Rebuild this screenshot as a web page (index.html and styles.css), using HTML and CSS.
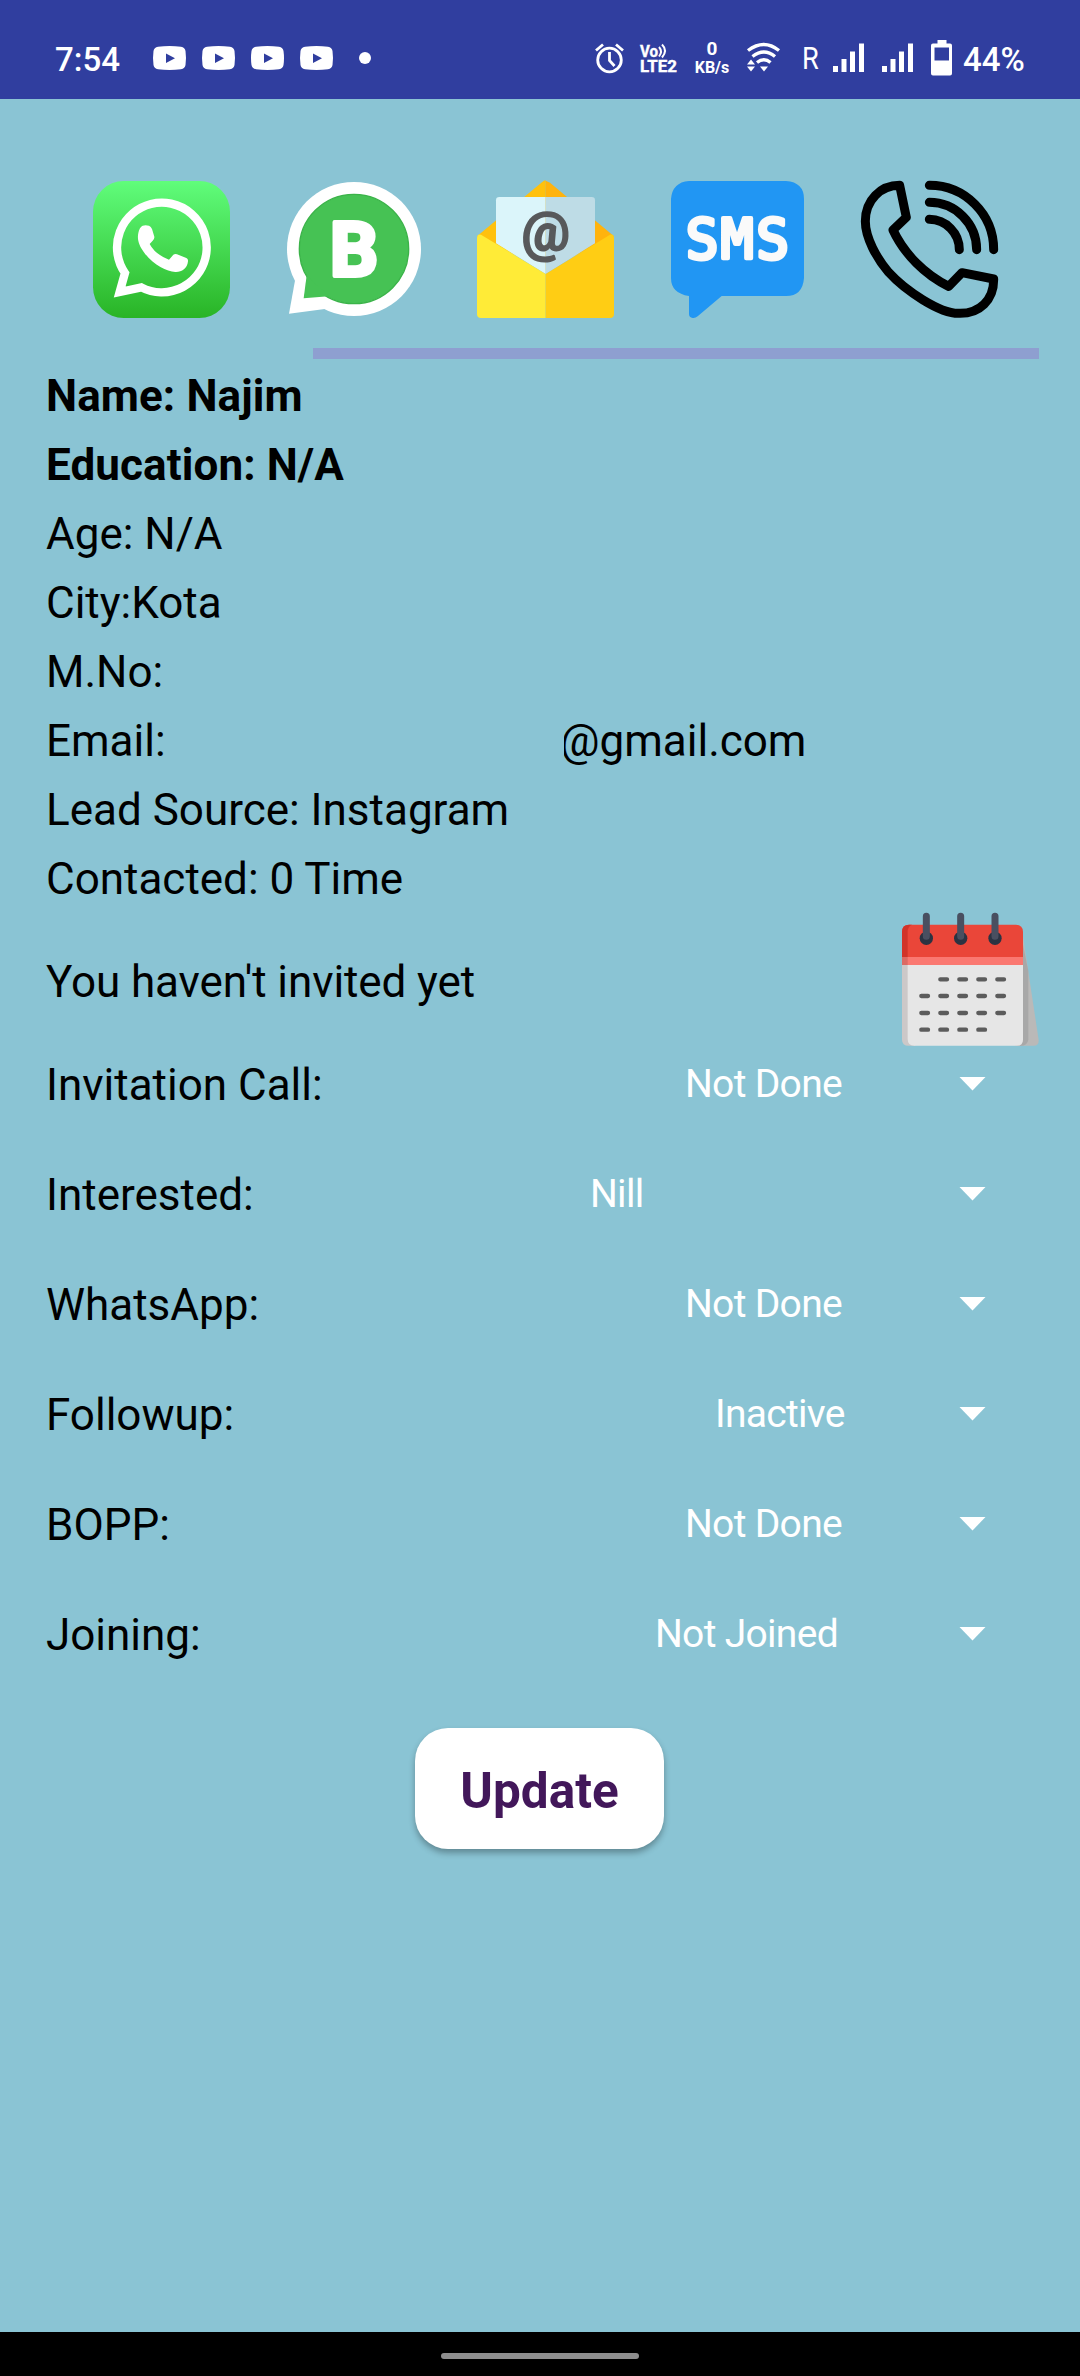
FILE: index.html
```html
<!DOCTYPE html>
<html lang="en">
<head>
    <meta charset="UTF-8">
    <meta name="viewport" content="width=device-width, initial-scale=1.0">
    <title>Lead Details</title>
    <link rel="stylesheet" href="styles.css">
</head>
<body>
    <div class="screen">
        <header class="status-bar">
            <span class="clock">7:54</span>
            <div class="notifications">
                <svg class="yt" viewBox="0 0 33 24"><path fill="#fff" fill-rule="evenodd" d="M5 .8Q16.500-.8 28 .8Q32 1.500 32.500 5Q33.500 12 32.500 19Q32 22.500 28 23.200Q16.500 24.800 5 23.200Q1 22.500 .5 19Q-.5 12 .5 5Q1 1.500 5 .8ZM13 7.500V17L22 12.200Z"/></svg>
                <svg class="yt" viewBox="0 0 33 24"><path fill="#fff" fill-rule="evenodd" d="M5 .8Q16.500-.8 28 .8Q32 1.500 32.500 5Q33.500 12 32.500 19Q32 22.500 28 23.200Q16.500 24.800 5 23.200Q1 22.500 .5 19Q-.5 12 .5 5Q1 1.500 5 .8ZM13 7.500V17L22 12.200Z"/></svg>
                <svg class="yt" viewBox="0 0 33 24"><path fill="#fff" fill-rule="evenodd" d="M5 .8Q16.500-.8 28 .8Q32 1.500 32.500 5Q33.500 12 32.500 19Q32 22.500 28 23.200Q16.500 24.800 5 23.200Q1 22.500 .5 19Q-.5 12 .5 5Q1 1.500 5 .8ZM13 7.500V17L22 12.200Z"/></svg>
                <svg class="yt" viewBox="0 0 33 24"><path fill="#fff" fill-rule="evenodd" d="M5 .8Q16.500-.8 28 .8Q32 1.500 32.500 5Q33.500 12 32.500 19Q32 22.500 28 23.200Q16.500 24.800 5 23.200Q1 22.500 .5 19Q-.5 12 .5 5Q1 1.500 5 .8ZM13 7.500V17L22 12.200Z"/></svg>
                <span class="dot"></span>
            </div>
            <div class="system-icons">
                <svg class="alarm" viewBox="0 0 29 30" fill="none" stroke="#fff" stroke-width="2.800"><circle cx="14.500" cy="17" r="11.800"/><path d="M14.500 9v8.500l5 5.500M1 7.500L8 1.500M28 7.500L21 1.500"/></svg>
                <svg class="volte" viewBox="0 0 37 30"><g fill="#fff" stroke="#fff" stroke-width=".4"><text x="0" y="13.500" font-size="16" font-weight="700" textLength="18" lengthAdjust="spacingAndGlyphs">Vo</text><text x="0" y="28.500" font-size="17" font-weight="700" textLength="37" lengthAdjust="spacingAndGlyphs">LTE2</text></g><path fill="none" stroke="#fff" stroke-width="2" d="M19 4q4 4.500 0 9.500M22 1.500q6 6 0 13"/></svg>
                <div class="speed"><span>0</span><span>KB/s</span></div>
                <svg class="wifi" viewBox="0 0 33 29"><g fill="none" stroke="#fff" stroke-width="3.400"><path d="M1 7.500Q17-4.500 32 7.500M5.500 13.500Q17 4.500 28 13.500M10 19.500Q17 14 23.500 19.500"/></g><path fill="#fff" d="M0 21.500L4 16.500L8 21.500ZM0 23.500L4 28.500L8 23.500ZM13 23.500L17 28.500L21 23.500Z"/></svg>
                <span class="roaming">R</span>
                <svg class="signal" viewBox="0 0 31 29" fill="#fff"><path d="M0 23h5v6H0zM8.500 16h5v13h-5zM17 8.500h5v20.500h-5zM26 .5h5v28.500h-5z"/></svg>
                <svg class="signal second" viewBox="0 0 31 29" fill="#fff"><path d="M0 23h5v6H0zM8.500 16h5v13h-5zM17 8.500h5v20.500h-5zM26 .5h5v28.500h-5z"/></svg>
                <svg class="battery" viewBox="0 0 21 36"><path fill="#fff" fill-rule="evenodd" d="M6.500 0h9v3.500H19q2 0 2 2V33.500q0 2-2 2H2q-2 0-2-2V5.500q0-2 2-2H6.500ZM3.500 7.500V20.500H18V7.500Z"/></svg>
                <span class="percent">44%</span>
            </div>
        </header>

        <main class="content">
            <nav class="contact-icons">
                <!-- WhatsApp -->
                <svg viewBox="39 63 411 411">
                    <defs>
                        <linearGradient id="waGreen" x1="0" y1="0" x2="0" y2="1">
                            <stop offset="0" stop-color="#60fd7b"/>
                            <stop offset="1" stop-color="#29b426"/>
                        </linearGradient>
                    </defs>
                    <rect x="39" y="63" width="411" height="411" rx="92" fill="url(#waGreen)"/>
                    <path fill="none" stroke="#fff" stroke-width="25" d="M119 396L135 339A134.500 134.500 0 1 1 184 382Z"/>
                    <path fill="#fff" d="M188 197Q196 194 207 197Q213 199 216 207L223 230Q224 236 218 242L209 252Q225 283 267 299L280 284Q285 281 291 283L319 294Q325 297 324 304C322 326 304 337 286 336C260 334 222 316 195 281C176 257 171 238 175 219C177 207 182 200 188 197Z"/>
                </svg>
                <!-- WhatsApp Business -->
                <svg viewBox="615 63 411 411">
                    <circle cx="822" cy="267" r="201" fill="#fff"/>
                    <path fill="#fff" d="M627 461L648 345L740 446Z"/>
                    <circle cx="822" cy="267" r="164" fill="#46c254" stroke="#3bb349" stroke-width="4"/>
                    <path fill="#46c254" d="M671 415L680 346L746 409Z"/>
                    <text class="badge-b" x="749" y="348">B</text>
                </svg>
                <!-- Email -->
                <svg viewBox="111 63 411 411">
                    <path fill="#ffc10d" d="M111 229L304 68Q317 58 317 62V330Z"/>
                    <path fill="#ffb30d" d="M522 229L330 68L317 62V330Z"/>
                    <path fill="#dbf5fa" d="M317 111H178Q168 111 168 121V250L317 342Z"/>
                    <path fill="#bedce6" d="M317 111H455Q465 111 465 121V250L317 342Z"/>
                    <path fill="#ffeb37" d="M317 342L123 224Q111 220 111 236V462Q111 474 123 474H317Z"/>
                    <path fill="#ffcd14" d="M317 342L510 224Q522 220 522 236V462Q522 474 510 474H317Z"/>
                    <text class="badge-at" x="317" y="269">@</text>
                </svg>
                <!-- SMS -->
                <svg viewBox="687 63 411 411">
                    <path fill="#2196f3" d="M747 63H1038Q1092 67 1092 117V354Q1088 408 1038 408H845L773 469Q766 475 758 474Q747 472 747 462V408Q693 400 693 354V117Q697 67 747 63Z"/>
                    <text class="badge-sms" x="737 842 949" y="294">SMS</text>
                </svg>
                <!-- Call -->
                <svg viewBox="123 63 411 411" fill="none" stroke="#000" stroke-width="27" stroke-linecap="round" stroke-linejoin="round">
                    <path d="M239 76L259 172L219 210C253 283 316 345 386 379L426 338L521 357C522 420 478 461 418 460C360 462 255 391 206 337C170 295 136 233 136 184C136 120 182 76 239 76Z"/>
                    <path d="M328 76A193 193 0 0 1 521 269M328 127A142 142 0 0 1 470 269M328 178A91 91 0 0 1 418 269"/>
                </svg>
            </nav>
            <div class="divider"></div>

            <section class="details">
                <p class="bold">Name: Najim</p>
                <p class="bold">Education: N/A</p>
                <p>Age: N/A</p>
                <p>City:Kota</p>
                <p>M.No:</p>
                <p class="email"><span>Email:</span><span class="domain">@gmail.com</span></p>
                <p>Lead Source: Instagram</p>
                <p>Contacted: 0 Time</p>
            </section>

            <section class="invite">
                <p>You haven't invited yet</p>
                <svg viewBox="0 0 411 411">
                    <path fill="#bab9b8" d="M362 70L410 387Q411 404 395 404H345V90Z"/>
                    <path fill="#a8a8a8" d="M362 95L379 180V386Q377 404 355 404H340V95Z"/>
                    <path fill="#ccc8c8" d="M0 150H40V404H20Q0 404 0 386Z"/>
                    <path fill="#e6e6e6" d="M17 150H363V386Q363 404 345 404H37Q17 404 17 384Z"/>
                    <path fill="#ea4639" d="M20 41H341Q363 41 363 63V138H0V63Q0 41 20 41Z"/>
                    <path fill="#d13329" d="M30 41H22Q0 41 0 63V138H17V63Q17 46 30 41Z"/>
                    <path fill="#fa7871" d="M0 138H363V162H0Z"/>
                    <path fill="#dc6a64" d="M0 138H17V162H0Z"/>
                    <g fill="#2c3342"><circle cx="73" cy="82" r="20"/><circle cx="176" cy="82" r="20"/><circle cx="279" cy="82" r="20"/></g>
                    <path stroke="#494f60" stroke-width="21" stroke-linecap="round" d="M73 16V76M176 16V76M279 16V76"/>
                    <path stroke="#5c5c5c" stroke-width="13" stroke-linecap="round" d="M115 205h20M172 205h20M229 205h20M286 205h20M58 255h20M115 255h20M172 255h20M229 255h20M286 255h20M58 306h20M115 306h20M172 306h20M229 306h20M286 306h20M58 356h20M115 356h20M172 356h20M229 356h20"/>
                </svg>
            </section>

            <section class="fields">
                <div class="field"><span class="label">Invitation Call:</span><div class="spinner not-done"><span>Not Done</span><i class="arrow"></i></div></div>
                <div class="field"><span class="label">Interested:</span><div class="spinner nill"><span>Nill</span><i class="arrow"></i></div></div>
                <div class="field"><span class="label">WhatsApp:</span><div class="spinner not-done"><span>Not Done</span><i class="arrow"></i></div></div>
                <div class="field"><span class="label">Followup:</span><div class="spinner inactive"><span>Inactive</span><i class="arrow"></i></div></div>
                <div class="field"><span class="label">BOPP:</span><div class="spinner not-done"><span>Not Done</span><i class="arrow"></i></div></div>
                <div class="field"><span class="label">Joining:</span><div class="spinner not-joined"><span>Not Joined</span><i class="arrow"></i></div></div>
            </section>

            <button class="update">Update</button>
        </main>

        <footer class="nav-bar"><span class="handle"></span></footer>
    </div>
</body>
</html>
```
FILE: styles.css
```css
* {
    box-sizing: border-box;
}

body {
    margin: 0;
    font-family: Roboto, sans-serif;
    color: #000;
}

p {
    margin: 0;
}

svg {
    display: block;
    flex: none;
    overflow: visible;
}

.screen {
    width: 1080px;
    height: 2376px;
    display: flex;
    flex-direction: column;
    background-color: #8ac4d4;
}

/* Status bar */
.status-bar {
    height: 99px;
    padding: 16px 0 0 55px;
    display: flex;
    align-items: center;
    background-color: #303e9f;
    color: #fff;
    font-size: 33px;
    font-weight: 500;
    white-space: nowrap;
}

.clock {
    width: 98px;
    padding-top: 3px;
}

.notifications {
    width: 442px;
    display: flex;
    align-items: center;
    gap: 16px;
}

.yt {
    width: 33px;
    height: 24px;
}

.dot {
    width: 12px;
    height: 12px;
    margin-left: 10px;
    border-radius: 50%;
    background-color: #fff;
}

.system-icons {
    display: flex;
    align-items: center;
}

.alarm {
    width: 29px;
    height: 30px;
    margin-right: 16px;
}

.volte {
    width: 37px;
    height: 30px;
    margin-right: 17px;
}

.speed {
    width: 36px;
    margin-right: 17px;
    display: flex;
    flex-direction: column;
    align-items: center;
    font-size: 19px;
    line-height: 19px;
    font-weight: 700;
}

.speed span:last-child {
    font-size: 16px;
}

.wifi {
    width: 33px;
    height: 29px;
    margin-right: 22px;
}

.roaming {
    width: 31px;
    font-size: 32px;
    font-weight: 400;
    transform: scaleX(0.85);
    transform-origin: left;
}

.signal {
    width: 31px;
    height: 29px;
}

.second {
    margin-left: 18px;
}

.battery {
    width: 21px;
    height: 36px;
    margin: 0 11px 0 18px;
}

.percent {
    padding-top: 3px;
}

/* Main content */
.content {
    flex: 1;
    display: flex;
    flex-direction: column;
    padding: 82px 41px 0 46px;
    font-size: 44px;
}

.contact-icons {
    display: flex;
    gap: 55px;
    padding-left: 47px;
}

.contact-icons svg {
    width: 137px;
    height: 137px;
}

.badge-b {
    font-size: 228px;
    font-weight: 700;
    fill: #fff;
    stroke: #fff;
    stroke-width: 12px;
    stroke-linejoin: round;
}

.badge-at {
    font-size: 162px;
    font-weight: 500;
    text-anchor: middle;
    fill: #58595b;
    stroke: #58595b;
    stroke-width: 6px;
    stroke-linejoin: round;
}

.badge-sms {
    font-family: "DejaVu Sans Mono", monospace;
    font-size: 163px;
    fill: #fafafa;
    stroke: #fafafa;
    stroke-width: 12px;
    stroke-linejoin: round;
}

.divider {
    width: 726px;
    height: 11px;
    margin-top: 30px;
    align-self: flex-end;
    background-color: #8e9fd0;
}

.details p {
    height: 69px;
    line-height: 69px;
    white-space: pre;
}

.details {
    padding-top: 3px;
}

.details .bold {
    font-weight: 700;
    letter-spacing: 0.1px;
}

.email {
    display: flex;
}

.email span:first-child {
    width: 518px;
}

.domain {
    overflow: hidden;
    text-indent: -4px;
}

.invite {
    height: 137px;
    margin-top: -3px;
    display: flex;
    align-items: center;
    justify-content: space-between;
}

.invite p {
    padding-top: 4px;
    letter-spacing: -0.1px;
}

.invite svg {
    width: 137px;
    height: 137px;
}

/* Spinner rows */
.field {
    height: 110px;
    display: flex;
    align-items: center;
}

.fields {
    margin-top: -18px;
}

.label {
    width: 500px;
}

.spinner {
    width: 440px;
    display: flex;
    align-items: center;
    justify-content: space-between;
    color: #fff;
    font-size: 39px;
    letter-spacing: -0.7px;
}

.spinner span {
    margin-top: -2px;
}

.spinner.not-done {
    padding-left: 139px;
}

.spinner.nill {
    padding-left: 44px;
}

.spinner.inactive {
    padding-left: 169px;
}

.spinner.not-joined {
    padding-left: 109px;
}

.arrow {
    width: 27px;
    height: 14px;
    margin-top: -3px;
    background-color: #fff;
    clip-path: polygon(0 0, 100% 0, 50% 100%);
}

.update {
    width: 249px;
    height: 121px;
    margin: 38px 0 0 369px;
    padding: 5px 0 0;
    border: none;
    border-radius: 33px;
    background-color: #fff;
    box-shadow: 0 4px 6px rgba(0, 0, 0, 0.3);
    color: #42175a;
    font-family: inherit;
    font-size: 49.5px;
    font-weight: 700;
}

/* Gesture bar */
.nav-bar {
    height: 44px;
    display: flex;
    align-items: center;
    justify-content: center;
    padding-top: 4px;
    background-color: #000;
}

.handle {
    width: 198px;
    height: 6px;
    border-radius: 3px;
    background-color: #8e8e8e;
}
```
